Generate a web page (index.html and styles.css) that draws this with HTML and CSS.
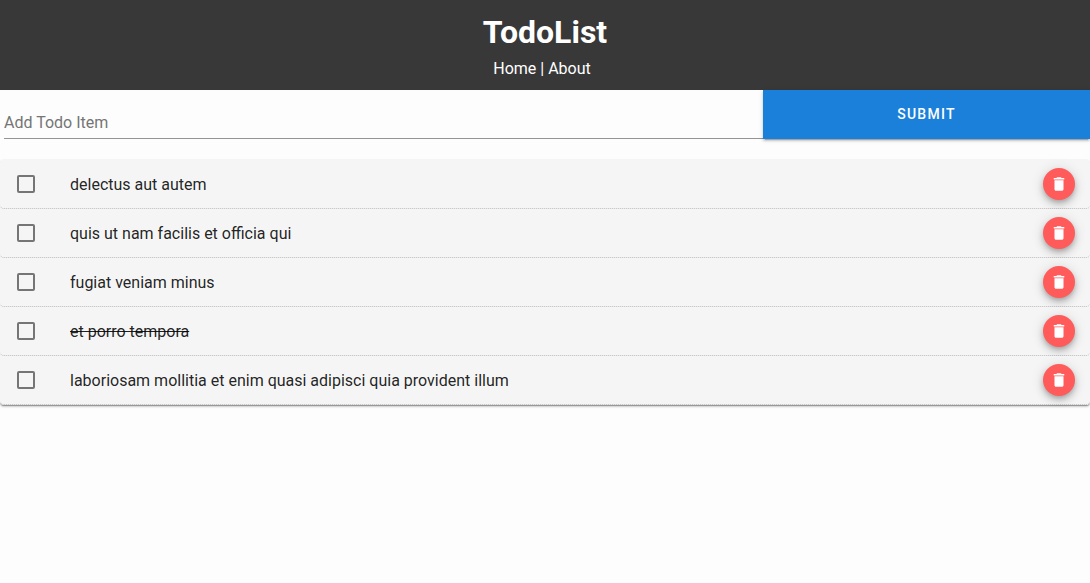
FILE: index.html
```html
<!DOCTYPE html>
<html lang="en">
<head>
<meta charset="utf-8">
<meta name="viewport" content="width=device-width, initial-scale=1">
<title>TodoList</title>
<link rel="stylesheet" href="styles.css">
</head>
<body>
<svg class="sprite" aria-hidden="true">
  <symbol id="trash" viewBox="0 0 24 24"><path d="M6 19c0 1.100.9 2 2 2h8c1.100 0 2-.9 2-2V7H6v12zM19 4h-3.500l-1-1h-5l-1 1H5v2h14V4z"/></symbol>
</svg>
<header class="header">
  <h1 class="title">TodoList</h1>
  <nav class="nav"><a href="#home">Home</a> | <a href="#about">About</a></nav>
</header>
<main>
  <form class="add-form">
    <div class="field"><input class="field-input" type="text" placeholder="Add Todo Item" aria-label="Add Todo Item"></div>
    <button class="submit" type="submit">SUBMIT</button>
  </form>
  <ul class="todos">
    <li class="todo"><input class="check" type="checkbox" id="t1"><label class="label" for="t1">delectus aut autem</label><button class="delete" type="button" aria-label="Delete"><svg class="icon"><use href="#trash"/></svg></button></li>
    <li class="todo"><input class="check" type="checkbox" id="t2"><label class="label" for="t2">quis ut nam facilis et officia qui</label><button class="delete" type="button" aria-label="Delete"><svg class="icon"><use href="#trash"/></svg></button></li>
    <li class="todo"><input class="check" type="checkbox" id="t3"><label class="label" for="t3">fugiat veniam minus</label><button class="delete" type="button" aria-label="Delete"><svg class="icon"><use href="#trash"/></svg></button></li>
    <li class="todo"><input class="check" type="checkbox" id="t4"><label class="label done" for="t4">et porro tempora</label><button class="delete" type="button" aria-label="Delete"><svg class="icon"><use href="#trash"/></svg></button></li>
    <li class="todo"><input class="check" type="checkbox" id="t5"><label class="label" for="t5">laboriosam mollitia et enim quasi adipisci quia provident illum</label><button class="delete" type="button" aria-label="Delete"><svg class="icon"><use href="#trash"/></svg></button></li>
  </ul>
</main>
</body>
</html>
```
FILE: styles.css
```css
* { box-sizing: border-box; }
body {
  min-height: 100vh;
  margin: 0;
  background: #fdfdfd;
  color: rgba(0, 0, 0, 0.87);
  font: 16px/24px Roboto, sans-serif;
}
.sprite { display: none; }
.header {
  padding: 10px 10px 7px;
  background: #383838;
  color: #fff;
  text-align: center;
}
.title { margin: 0; font-size: 32px; line-height: 45px; font-weight: 700; }
.nav { padding-right: 6px; line-height: 28px; }
.nav a { color: inherit; text-decoration: none; }
.add-form { display: flex; margin-bottom: 20px; }
.field { flex: 1; padding-left: 4px; }
.field-input {
  display: block;
  width: 100%;
  height: 49px;
  padding: 16px 0 0;
  border: 0;
  border-bottom: 1px solid #949494;
  background: transparent;
  font: inherit;
  outline: 0;
}
.field-input::placeholder { color: #757575; opacity: 1; }
.submit {
  width: 30%;
  padding: 0 0 2px;
  border: 0;
  background: #1a80d9;
  color: #fff;
  font: 500 14px/24px Roboto, sans-serif;
  letter-spacing: 0.09em;
  box-shadow: 0 3px 1px -2px rgba(0, 0, 0, 0.2), 0 2px 2px rgba(0, 0, 0, 0.14), 0 1px 5px rgba(0, 0, 0, 0.12);
}
.todos {
  margin: 0;
  padding: 1px 0 0;
  list-style: none;
  background: #f5f5f5;
  border-radius: 4px;
  box-shadow: 0 1px 0 rgba(0, 0, 0, 0.25), 0 2px 2px rgba(0, 0, 0, 0.2);
}
.todo {
  position: relative;
  display: flex;
  align-items: center;
  padding: 8px 15px 8px 17px;
  background: #f5f5f5;
  border-bottom: 1px dotted #bbb;
  border-radius: 4px;
}
.check {
  appearance: none;
  width: 18px;
  height: 18px;
  margin: 0;
  border: 2px solid #757575;
  border-radius: 2px;
}
.label { flex: 1; padding: 2px 0 0 35px; }
.done { text-decoration: line-through; }
.delete {
  display: grid;
  place-items: center;
  width: 32px;
  height: 32px;
  padding: 0;
  border: 0;
  border-radius: 50%;
  background: #ff5b5b;
  box-shadow: 0 3px 5px -1px rgba(0, 0, 0, 0.2), 0 5px 8px rgba(0, 0, 0, 0.14), 0 1px 14px rgba(0, 0, 0, 0.12);
}
.icon { width: 18px; height: 18px; fill: #fff; }
```
